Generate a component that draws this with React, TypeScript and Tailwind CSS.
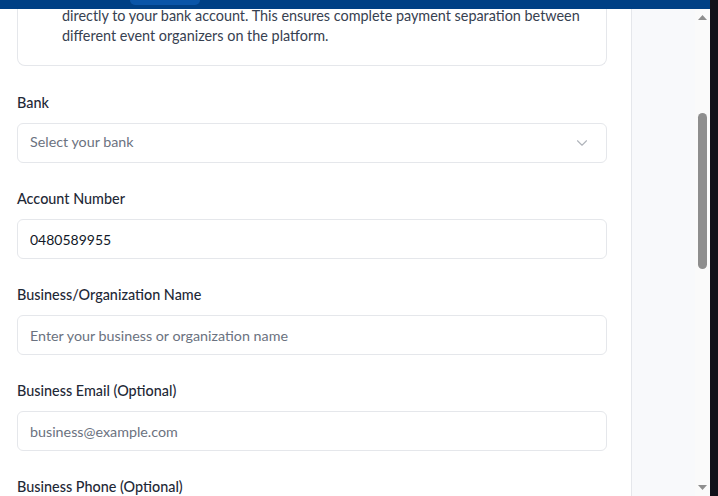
import { ChevronDown } from 'lucide-react';

const fields = [
  { label: 'Account Number', value: '0480589955', placeholder: 'Enter your account number' },
  { label: 'Business/Organization Name', value: '', placeholder: 'Enter your business or organization name' },
  { label: 'Business Email (Optional)', value: '', placeholder: 'business@example.com' },
  { label: 'Business Phone (Optional)', value: '', placeholder: '+254 700 000 000' },
];

export default function App() {
  return (
    <div className="relative flex h-[496px] w-[718px] overflow-hidden bg-[#f8f9fb] font-['Lato',sans-serif]">
      {/* page header edge, sits over the scrolled content */}
      <div className="absolute left-0 right-2 top-0 z-10 h-[9px] bg-[#004085]">
        <div className="absolute left-[130px] top-0 h-[5px] w-[70px] rounded-b-md bg-[#0a55a8]" />
      </div>

      <div className="flex min-w-0 flex-1">
        <div className="w-[632px] shrink-0 overflow-hidden border-r border-[#e5e7eb] bg-white">
          <div className="pl-[17px] pr-[24px]">
            <div className="rounded-b-lg border border-t-0 border-[#e5e7eb] pb-[19px] pl-[44px] pr-4 pt-[6px] text-[14.4px] leading-5 text-[#374151]">
              <span className="block">directly to your bank account. This ensures complete payment separation between</span>
              <span className="block">different event organizers on the platform.</span>
            </div>

            <div className="mt-[27px] flex flex-col gap-[26px]">
              <div>
                <label className="mb-[10px] block text-[14.4px] font-medium leading-5 text-[#1f2937]">Bank</label>
                <button
                  type="button"
                  className="flex h-10 w-full items-center justify-between rounded-md border border-[#e5e7eb] bg-white pl-3 pr-[15px] text-left text-[14.3px] leading-5 text-[#6b7280]"
                >
                  <span className="-mt-[2px]">Select your bank</span>
                  <ChevronDown className="h-[18px] w-[18px] text-[#b0b4bb]" strokeWidth={1.5} />
                </button>
              </div>

              {fields.map((f) => (
                <div key={f.label}>
                  <label className="mb-[10px] block text-[14.4px] font-medium leading-5 text-[#1f2937]">{f.label}</label>
                  <input
                    defaultValue={f.value}
                    placeholder={f.placeholder}
                    className="block h-10 w-full rounded-md border border-[#e5e7eb] bg-white px-3 text-[14px] text-[#111827] outline-none placeholder:text-[14.3px] placeholder:text-[#6b7280]"
                  />
                </div>
              ))}
            </div>
          </div>
        </div>

        <div className="flex-1" />

        <div className="flex w-[15px] shrink-0 flex-col items-center bg-[#fafafa] pb-[6px] pt-[15px]">
          <svg width="9" height="5" viewBox="0 0 9 5" className="shrink-0">
            <polygon points="4.5,0 9,5 0,5" fill="#8e8e8e" />
          </svg>
          <div className="mt-[93px] h-[156px] w-[9px] shrink-0 rounded-full bg-[#8e8e8e]" />
          <div className="flex-1" />
          <svg width="9" height="5" viewBox="0 0 9 5" className="shrink-0">
            <polygon points="0,0 9,0 4.5,5" fill="#8e8e8e" />
          </svg>
        </div>
      </div>
      <div className="w-2 shrink-0 bg-[#11111a]" />
    </div>
  );
}
